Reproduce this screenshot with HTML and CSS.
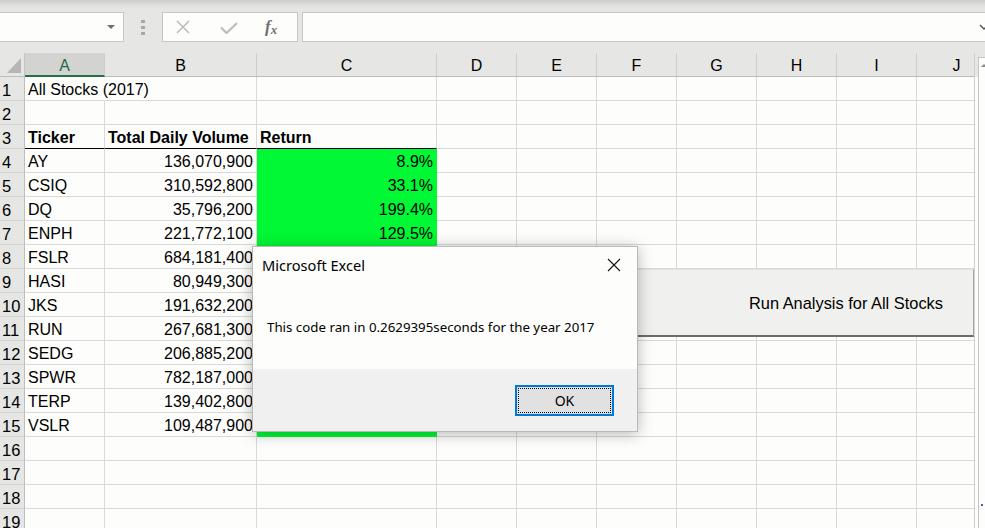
FILE: index.html
```html
<!DOCTYPE html>
<html>
<head>
<meta charset="utf-8">
<link rel="stylesheet" href="styles.css">
</head>
<body>
<div class="app">
  <div class="toolbar">
    <div class="namebox"><span class="nb-arrow"></span></div>
    <div class="grip"><i></i><i></i><i></i></div>
    <div class="fxbox">
      <svg class="ic-x" width="16" height="14" viewBox="0 0 16 14"><path d="M2 1 L14 13 M14 1 L2 13" stroke="#bdbdbd" stroke-width="1.6" fill="none"/></svg>
      <svg class="ic-check" width="18" height="12" viewBox="0 0 18 12"><path d="M1 5.5 L6.5 11 L17 1" stroke="#bdbdbd" stroke-width="2.2" fill="none"/></svg>
      <span class="fx">f<sub>x</sub></span>
    </div>
    <div class="formula"><svg class="chev" width="10" height="6" viewBox="0 0 10 6"><path d="M1 1 L5 5 L9 1" stroke="#555" stroke-width="1.4" fill="none"/></svg></div>
  </div>

  <div class="sheetwrap">
    <div class="sheet">
      <div class="row hdr">
        <div class="corner"><span class="tri"></span></div>
        <div class="ch sel">A</div><div class="ch">B</div><div class="ch">C</div><div class="ch">D</div><div class="ch">E</div><div class="ch">F</div><div class="ch">G</div><div class="ch">H</div><div class="ch">I</div><div class="ch">J</div>
      </div>
      <div class="row"><div class="rh">1</div><div class="c ovf">All Stocks (2017)</div><div class="c"></div><div class="c"></div><div class="c"></div><div class="c"></div><div class="c"></div><div class="c"></div><div class="c"></div><div class="c"></div><div class="c"></div></div>
      <div class="row"><div class="rh">2</div><div class="c"></div><div class="c"></div><div class="c"></div><div class="c"></div><div class="c"></div><div class="c"></div><div class="c"></div><div class="c"></div><div class="c"></div><div class="c"></div></div>
      <div class="row"><div class="rh">3</div><div class="c b hb">Ticker</div><div class="c b hb">Total Daily Volume</div><div class="c b hb">Return</div><div class="c"></div><div class="c"></div><div class="c"></div><div class="c"></div><div class="c"></div><div class="c"></div><div class="c"></div></div>
      <div class="row"><div class="rh">4</div><div class="c">AY</div><div class="c r">136,070,900</div><div class="c r g">8.9%</div><div class="c"></div><div class="c"></div><div class="c"></div><div class="c"></div><div class="c"></div><div class="c"></div><div class="c"></div></div>
      <div class="row"><div class="rh">5</div><div class="c">CSIQ</div><div class="c r">310,592,800</div><div class="c r g">33.1%</div><div class="c"></div><div class="c"></div><div class="c"></div><div class="c"></div><div class="c"></div><div class="c"></div><div class="c"></div></div>
      <div class="row"><div class="rh">6</div><div class="c">DQ</div><div class="c r">35,796,200</div><div class="c r g">199.4%</div><div class="c"></div><div class="c"></div><div class="c"></div><div class="c"></div><div class="c"></div><div class="c"></div><div class="c"></div></div>
      <div class="row"><div class="rh">7</div><div class="c">ENPH</div><div class="c r">221,772,100</div><div class="c r g">129.5%</div><div class="c"></div><div class="c"></div><div class="c"></div><div class="c"></div><div class="c"></div><div class="c"></div><div class="c"></div></div>
      <div class="row"><div class="rh">8</div><div class="c">FSLR</div><div class="c r">684,181,400</div><div class="c r g"></div><div class="c"></div><div class="c"></div><div class="c"></div><div class="c"></div><div class="c"></div><div class="c"></div><div class="c"></div></div>
      <div class="row"><div class="rh">9</div><div class="c">HASI</div><div class="c r">80,949,300</div><div class="c r g"></div><div class="c"></div><div class="c"></div><div class="c"></div><div class="c"></div><div class="c"></div><div class="c"></div><div class="c"></div></div>
      <div class="row"><div class="rh">10</div><div class="c">JKS</div><div class="c r">191,632,200</div><div class="c r g"></div><div class="c"></div><div class="c"></div><div class="c"></div><div class="c"></div><div class="c"></div><div class="c"></div><div class="c"></div></div>
      <div class="row"><div class="rh">11</div><div class="c">RUN</div><div class="c r">267,681,300</div><div class="c r g"></div><div class="c"></div><div class="c"></div><div class="c"></div><div class="c"></div><div class="c"></div><div class="c"></div><div class="c"></div></div>
      <div class="row"><div class="rh">12</div><div class="c">SEDG</div><div class="c r">206,885,200</div><div class="c r g"></div><div class="c"></div><div class="c"></div><div class="c"></div><div class="c"></div><div class="c"></div><div class="c"></div><div class="c"></div></div>
      <div class="row"><div class="rh">13</div><div class="c">SPWR</div><div class="c r">782,187,000</div><div class="c r g"></div><div class="c"></div><div class="c"></div><div class="c"></div><div class="c"></div><div class="c"></div><div class="c"></div><div class="c"></div></div>
      <div class="row"><div class="rh">14</div><div class="c">TERP</div><div class="c r">139,402,800</div><div class="c r g"></div><div class="c"></div><div class="c"></div><div class="c"></div><div class="c"></div><div class="c"></div><div class="c"></div><div class="c"></div></div>
      <div class="row"><div class="rh">15</div><div class="c">VSLR</div><div class="c r">109,487,900</div><div class="c r g"></div><div class="c"></div><div class="c"></div><div class="c"></div><div class="c"></div><div class="c"></div><div class="c"></div><div class="c"></div></div>
      <div class="row"><div class="rh">16</div><div class="c"></div><div class="c"></div><div class="c"></div><div class="c"></div><div class="c"></div><div class="c"></div><div class="c"></div><div class="c"></div><div class="c"></div><div class="c"></div></div>
      <div class="row"><div class="rh">17</div><div class="c"></div><div class="c"></div><div class="c"></div><div class="c"></div><div class="c"></div><div class="c"></div><div class="c"></div><div class="c"></div><div class="c"></div><div class="c"></div></div>
      <div class="row"><div class="rh">18</div><div class="c"></div><div class="c"></div><div class="c"></div><div class="c"></div><div class="c"></div><div class="c"></div><div class="c"></div><div class="c"></div><div class="c"></div><div class="c"></div></div>
      <div class="row"><div class="rh">19</div><div class="c"></div><div class="c"></div><div class="c"></div><div class="c"></div><div class="c"></div><div class="c"></div><div class="c"></div><div class="c"></div><div class="c"></div><div class="c"></div></div>
    </div>
    <div class="vscroll"><div class="track"><span class="up"></span><span class="dot"></span></div></div>

    <div class="macro-btn">Run Analysis for All Stocks</div>

    <div class="dialog">
      <div class="dlg-title">
        <span>Microsoft Excel</span>
        <svg class="close" width="14" height="14" viewBox="0 0 14 14"><path d="M1 1 L13 13 M13 1 L1 13" stroke="#111" stroke-width="1.1" fill="none"/></svg>
      </div>
      <div class="dlg-body">This code ran in 0.2629395seconds for the year 2017</div>
      <div class="dlg-foot"><div class="ok"><span>OK</span></div></div>
    </div>
  </div>
</div>
</body>
</html>
```

FILE: styles.css
```css
* { box-sizing: border-box; }
html, body { margin: 0; padding: 0; }
body {
  width: 985px;
  height: 528px;
  overflow: hidden;
  background: #fdfdfb;
  font-family: "Liberation Sans", Arial, sans-serif;
  color: #000;
}
.app { width: 985px; height: 528px; overflow: hidden; }

/* toolbar */
.toolbar {
  height: 53px;
  padding-top: 12px;
  display: flex;
  align-items: flex-start;
  background: linear-gradient(#cdcdcd 0, #e2e2e0 6px, #e6e6e4 10px);
  overflow: hidden;
}
.namebox {
  width: 124px;
  height: 30px;
  background: #fdfdfb;
  border: 1px solid #c6c6c6;
  border-left: none;
  display: flex;
  align-items: center;
  justify-content: flex-end;
  padding-right: 8px;
}
.nb-arrow {
  width: 0; height: 0;
  border-left: 4px solid transparent;
  border-right: 4px solid transparent;
  border-top: 4px solid #6f6f6f;
}
.grip {
  width: 38px;
  height: 30px;
  display: flex;
  flex-direction: column;
  align-items: center;
  justify-content: center;
  gap: 3px;
}
.grip i { display: block; width: 4px; height: 3px; background: #a8a8a8; }
.fxbox {
  width: 136px;
  height: 30px;
  background: #fdfdfb;
  border: 1px solid #c6c6c6;
  display: flex;
  align-items: center;
  padding-left: 12px;
}
.ic-check { margin-left: 29px; margin-top: 2px; }
.fx {
  margin-left: 27px;
  font-family: "Liberation Serif", "DejaVu Serif", serif;
  font-style: italic;
  font-weight: bold;
  font-size: 17px;
  color: #707070;
  line-height: 1;
}
.fx sub { font-size: 13px; vertical-align: -2px; }
.formula {
  flex: 1;
  margin-left: 4px;
  height: 30px;
  background: #fdfdfb;
  border: 1px solid #c6c6c6;
  border-right: none;
  display: flex;
  align-items: center;
  justify-content: flex-end;
  margin-right: -4px;
}

/* sheet */
.sheetwrap { position: relative; height: 475px; overflow: hidden; }
.sheet { width: 1000px; }
.row {
  display: grid;
  grid-template-columns: 25px 80px 152px 180px repeat(7, 80px);
  height: 24px;
  font-size: 16px;
}
.corner {
  background: #e6e6e4;
  border-right: 1px solid #c4c4c4;
  border-bottom: 1px solid #bdbdbd;
  display: flex;
  justify-content: flex-end;
  align-items: flex-end;
  padding: 0 3px 3px 0;
}
.tri {
  display: block;
  width: 14px;
  height: 15px;
  background: #b6b6b6;
  clip-path: polygon(100% 0, 100% 100%, 0 100%);
}
.ch {
  background: #e6e6e4;
  border-right: 1px solid #cdcdcd;
  border-bottom: 1px solid #bdbdbd;
  display: flex;
  align-items: center;
  justify-content: center;
  padding-top: 3px;
}
.ch.sel {
  background: #d3d3d1;
  color: #1e6b45;
  border-bottom: 2px solid #217346;
  padding-top: 4px;
}
.rh {
  background: #e6e6e4;
  border-right: 1px solid #bdbdbd;
  border-bottom: 1px solid #d0d0d0;
  display: flex;
  align-items: center;
  padding: 3px 0 0 2px;
  font-size: 16.5px;
}
.c {
  border-right: 1px solid #d9d9d9;
  border-bottom: 1px solid #d9d9d9;
  padding: 3px 3px 0;
  display: flex;
  align-items: center;
  white-space: nowrap;
  min-width: 0;
}
.c.ovf { border-right-color: transparent; }
.c.r { justify-content: flex-end; }
.c.b { font-weight: bold; }
.c.hb { border-bottom-color: #000; }
.c.g { background: #00f834; border-right-color: #00f834; border-bottom-color: #00f834; }

/* vertical scrollbar, lying over the sheet's right edge */
.vscroll {
  position: absolute;
  right: 0;
  top: 0;
  bottom: 0;
  width: 11px;
  border-left: 1px solid #d0d0d0;
  background: linear-gradient(#e6e6e4 0 24px, #fdfdfb 24px);
}
.track {
  position: relative;
  margin-left: 3px;
  margin-top: 4px;
  height: 480px;
  border-left: 1px solid #c6c6c6;
  border-top: 1px solid #c6c6c6;
  background: #fdfdfb;
}
.up {
  position: absolute;
  left: 2px;
  top: 6px;
  width: 0; height: 0;
  border-left: 3px solid transparent;
  border-right: 3px solid transparent;
  border-bottom: 3px solid #8a8a8a;
}
.dot {
  position: absolute;
  left: 2px;
  top: 446px;
  width: 2px;
  height: 2px;
  background: #3b5bd6;
}

/* macro button shape */
.macro-btn {
  position: absolute;
  left: 540px;
  top: 216px;
  width: 434px;
  height: 68px;
  background: #f0f0ee;
  border-top: 1px solid #e2e2e2;
  border-right: 1px solid #a8a8a8;
  border-bottom: 2px solid #6b6b6b;
  display: flex;
  align-items: center;
  justify-content: flex-end;
  padding-right: 30px;
  padding-top: 2px;
  font-size: 16.4px;
  white-space: nowrap;
}

/* dialog */
.dialog {
  position: absolute;
  left: 252px;
  top: 193px;
  width: 386px;
  height: 186px;
  background: #fdfdfb;
  border: 1px solid #b9b9b9;
  box-shadow: 0 2px 14px rgba(0, 0, 0, 0.28);
  display: flex;
  flex-direction: column;
  font-family: "Noto Sans", "Open Sans", sans-serif;
  color: #000;
}
.dlg-title {
  height: 39px;
  display: flex;
  align-items: center;
  justify-content: space-between;
  padding: 0 16px 3px 9px;
  font-size: 14.6px;
}
.dlg-body {
  flex: 1;
  display: flex;
  align-items: center;
  padding: 0 0 1px 14px;
  font-size: 13.3px;
  white-space: nowrap;
}
.dlg-foot {
  height: 62px;
  background: #f0f0f0;
  display: flex;
  justify-content: flex-end;
  align-items: flex-start;
  padding: 16px 23px 0 0;
}
.ok {
  width: 99px;
  height: 31px;
  background: #e1e1e1;
  border: 2px solid #0078d7;
  display: flex;
  align-items: center;
  justify-content: center;
  outline: 1px dotted #000;
  outline-offset: -4px;
  font-size: 14px;
}
```
